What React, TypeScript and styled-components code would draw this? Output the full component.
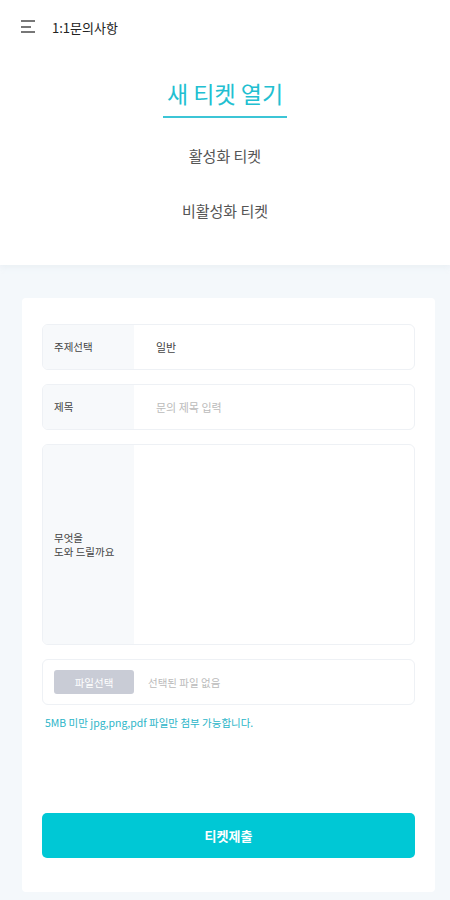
import styled, { createGlobalStyle } from "styled-components";

const Global = createGlobalStyle`
  body {
    margin: 0;
    background: #f4f8fb;
    font-family: "Noto Sans CJK KR", "Noto Sans", sans-serif;
  }
`;

const App = () => {
  return (
    <Page>
      <Global />
      <Top>
        <Header>
          <Burger width="16" height="14" viewBox="0 0 16 14">
            <rect x="0" y="0" width="14" height="2" fill="#777" />
            <rect x="0" y="6" width="10" height="2" fill="#777" />
            <rect x="0" y="11" width="14" height="2" fill="#777" />
          </Burger>
          <HeaderTitle>1:1문의사항</HeaderTitle>
        </Header>
        <Tabs>
          <Tab $active>새 티켓 열기</Tab>
          <Tab>활성화 티켓</Tab>
          <Tab>비활성화 티켓</Tab>
        </Tabs>
      </Top>
      <Main>
        <Card>
          <Field>
            <Label>주제선택</Label>
            <Value>일반</Value>
          </Field>
          <Field>
            <Label>제목</Label>
            <Value $placeholder>문의 제목 입력</Value>
          </Field>
          <Field $tall>
            <Label>
              무엇을
              <br />
              도와 드릴까요
            </Label>
            <Value />
          </Field>
          <FileRow>
            <FileButton>파일선택</FileButton>
            <FileName>선택된 파일 없음</FileName>
          </FileRow>
          <Note>5MB 미만 jpg,png,pdf 파일만 첨부 가능합니다.</Note>
          <Submit>티켓제출</Submit>
        </Card>
      </Main>
    </Page>
  );
};

const Page = styled.div`
  display: flex;
  flex-direction: column;
  min-height: 900px;
`;

const Top = styled.section`
  background: #fff;
  height: 265px;
  box-shadow: 0 2px 6px rgba(200, 210, 225, 0.25);
`;

const Header = styled.header`
  display: flex;
  align-items: center;
  height: 54px;
  padding-left: 21px;
  gap: 15px;
`;

const Burger = styled.svg`
  display: block;
`;

const HeaderTitle = styled.h1`
  margin: 0;
  font-size: 13px;
  font-weight: 400;
  color: #222;
`;

const Tabs = styled.nav`
  display: flex;
  flex-direction: column;
  align-items: center;
  padding-top: 21px;
`;

const Tab = styled.div<{ $active?: boolean }>`
  font-size: ${(p) => (p.$active ? "23px" : "15px")};
  line-height: ${(p) => (p.$active ? "37px" : "22px")};
  color: ${(p) => (p.$active ? "#22bfd1" : "#555")};
  font-weight: 400;
  padding: ${(p) => (p.$active ? "0 4px 4px" : "0")};
  border-bottom: ${(p) => (p.$active ? "2px solid #3cc5d6" : "none")};
  margin-bottom: ${(p) => (p.$active ? "27px" : "33px")};
`;

const Main = styled.main`
  padding: 33px 15px 8px 22px;
`;

const Card = styled.div`
  background: #fff;
  border-radius: 4px;
  padding: 26px 20px 34px;
  display: flex;
  flex-direction: column;
`;

const Field = styled.div<{ $tall?: boolean }>`
  display: flex;
  height: ${(p) => (p.$tall ? "201px" : "46px")};
  border: 1px solid #eef1f5;
  border-radius: 6px;
  overflow: hidden;
  box-sizing: border-box;
  margin-bottom: 14px;
`;

const Label = styled.div`
  width: 91px;
  flex: none;
  background: #f7f9fb;
  display: flex;
  align-items: center;
  padding-left: 11px;
  box-sizing: border-box;
  font-size: 10.5px;
  font-weight: 400;
  line-height: 14px;
  color: #444;
`;

const Value = styled.div<{ $placeholder?: boolean }>`
  flex: 1;
  display: flex;
  align-items: center;
  padding-left: 22px;
  font-size: 11px;
  color: ${(p) => (p.$placeholder ? "#bbb" : "#444")};
`;

const FileRow = styled.div`
  display: flex;
  align-items: center;
  height: 46px;
  border: 1px solid #eef1f5;
  border-radius: 6px;
  box-sizing: border-box;
  padding-left: 11px;
  gap: 14px;
`;

const FileButton = styled.button`
  width: 80px;
  height: 24px;
  border: none;
  border-radius: 3px;
  background: #c9ccd6;
  color: #fff;
  font-family: inherit;
  font-size: 10.5px;
  padding: 0;
`;

const FileName = styled.span`
  font-size: 10.5px;
  color: #bbb;
`;

const Note = styled.p`
  margin: 10px 0 0 3px;
  font-size: 10.5px;
  line-height: 16px;
  color: #2bb5c8;
`;

const Submit = styled.button`
  margin-top: 82px;
  height: 45px;
  border: none;
  border-radius: 5px;
  background: #00c8d5;
  color: #fff;
  font-family: inherit;
  font-size: 13px;
  font-weight: 700;
`;

export default App;
